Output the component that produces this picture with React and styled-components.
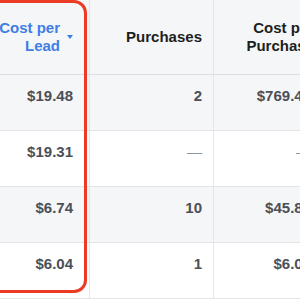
import React from 'react'
import styled, { createGlobalStyle } from 'styled-components'

const rows = [
  { lead: '$19.48', purchases: '2', costPurchase: '$769.46', shade: true },
  { lead: '$19.31', purchases: null, costPurchase: null, shade: false },
  { lead: '$6.74', purchases: '10', costPurchase: '$45.82', shade: true },
  { lead: '$6.04', purchases: '1', costPurchase: '$6.04', shade: false },
]

function App() {
  return (
    <>
      <GlobalStyle />
      <Frame>
        <Table>
          <HeaderCell $pad={16}>
            <HeaderLabel $active>Cost per<br />Lead</HeaderLabel>
            <Caret />
          </HeaderCell>
          <HeaderCell $pad={11}>
            <HeaderLabel>Purchases</HeaderLabel>
          </HeaderCell>
          <HeaderCell $pad={8} $last>
            <HeaderLabel>Cost per<br />Purchase</HeaderLabel>
          </HeaderCell>

          {rows.map((r, i) => (
            <React.Fragment key={i}>
              <Cell $shade={r.shade} $pad={16}>
                <Value>{r.lead}</Value>
              </Cell>
              <Cell $shade={r.shade} $pad={11}>
                {r.purchases ? <Value>{r.purchases}</Value> : <Dash>—</Dash>}
              </Cell>
              <Cell $shade={r.shade} $pad={11} $last>
                {r.costPurchase ? <Value>{r.costPurchase}</Value> : <Dash>—</Dash>}
              </Cell>
            </React.Fragment>
          ))}
        </Table>
        <Highlight />
      </Frame>
    </>
  )
}

export default App

const GlobalStyle = createGlobalStyle`
body {
  margin: 0;
  background: #fff;
  font-family: "Liberation Sans", Arial, sans-serif;
  overflow: hidden;
}
`
const Frame = styled.div`
position: relative;
width: 300px;
height: 300px;
overflow: hidden;
`
const Table = styled.div`
display: grid;
grid-template-columns: 90px 124px 108px;
grid-template-rows: 75px repeat(4, 56px);
width: 322px;
`
const HeaderCell = styled.div`
box-sizing: border-box;
display: flex;
justify-content: flex-end;
align-items: center;
gap: 7px;
padding-right: ${p => p.$pad}px;
background: #f5f6f7;
border-bottom: 1px solid #dddfe2;
border-right: ${p => p.$last ? 'none' : '1px solid #e4e6ea'};
`
const HeaderLabel = styled.div`
font-size: 15px;
line-height: 18px;
font-weight: bold;
text-align: right;
white-space: nowrap;
color: ${p => p.$active ? '#3f7ee4' : '#1c1e21'};
`
const Caret = styled.span`
width: 0;
height: 0;
border-left: 3.5px solid transparent;
border-right: 3.5px solid transparent;
border-top: 4px solid #3f7ee4;
margin-top: -1px;
`
const Cell = styled.div`
box-sizing: border-box;
display: flex;
justify-content: flex-end;
align-items: flex-start;
padding: 12px ${p => p.$pad}px 0 0;
background: ${p => p.$shade ? '#f5f6f7' : '#fff'};
border-bottom: 1px solid #e2e4e8;
border-right: ${p => p.$last ? 'none' : '1px solid #e4e6ea'};
`
const Value = styled.span`
font-size: 15px;
line-height: 18px;
font-weight: bold;
color: #4b4f56;
`
const Dash = styled.span`
font-size: 15px;
line-height: 18px;
color: #8d949e;
`
const Highlight = styled.div`
position: absolute;
top: 0;
left: -30px;
width: 117px;
height: 293px;
box-sizing: border-box;
border: 3px solid #ec3b24;
border-radius: 13px;
pointer-events: none;
`
